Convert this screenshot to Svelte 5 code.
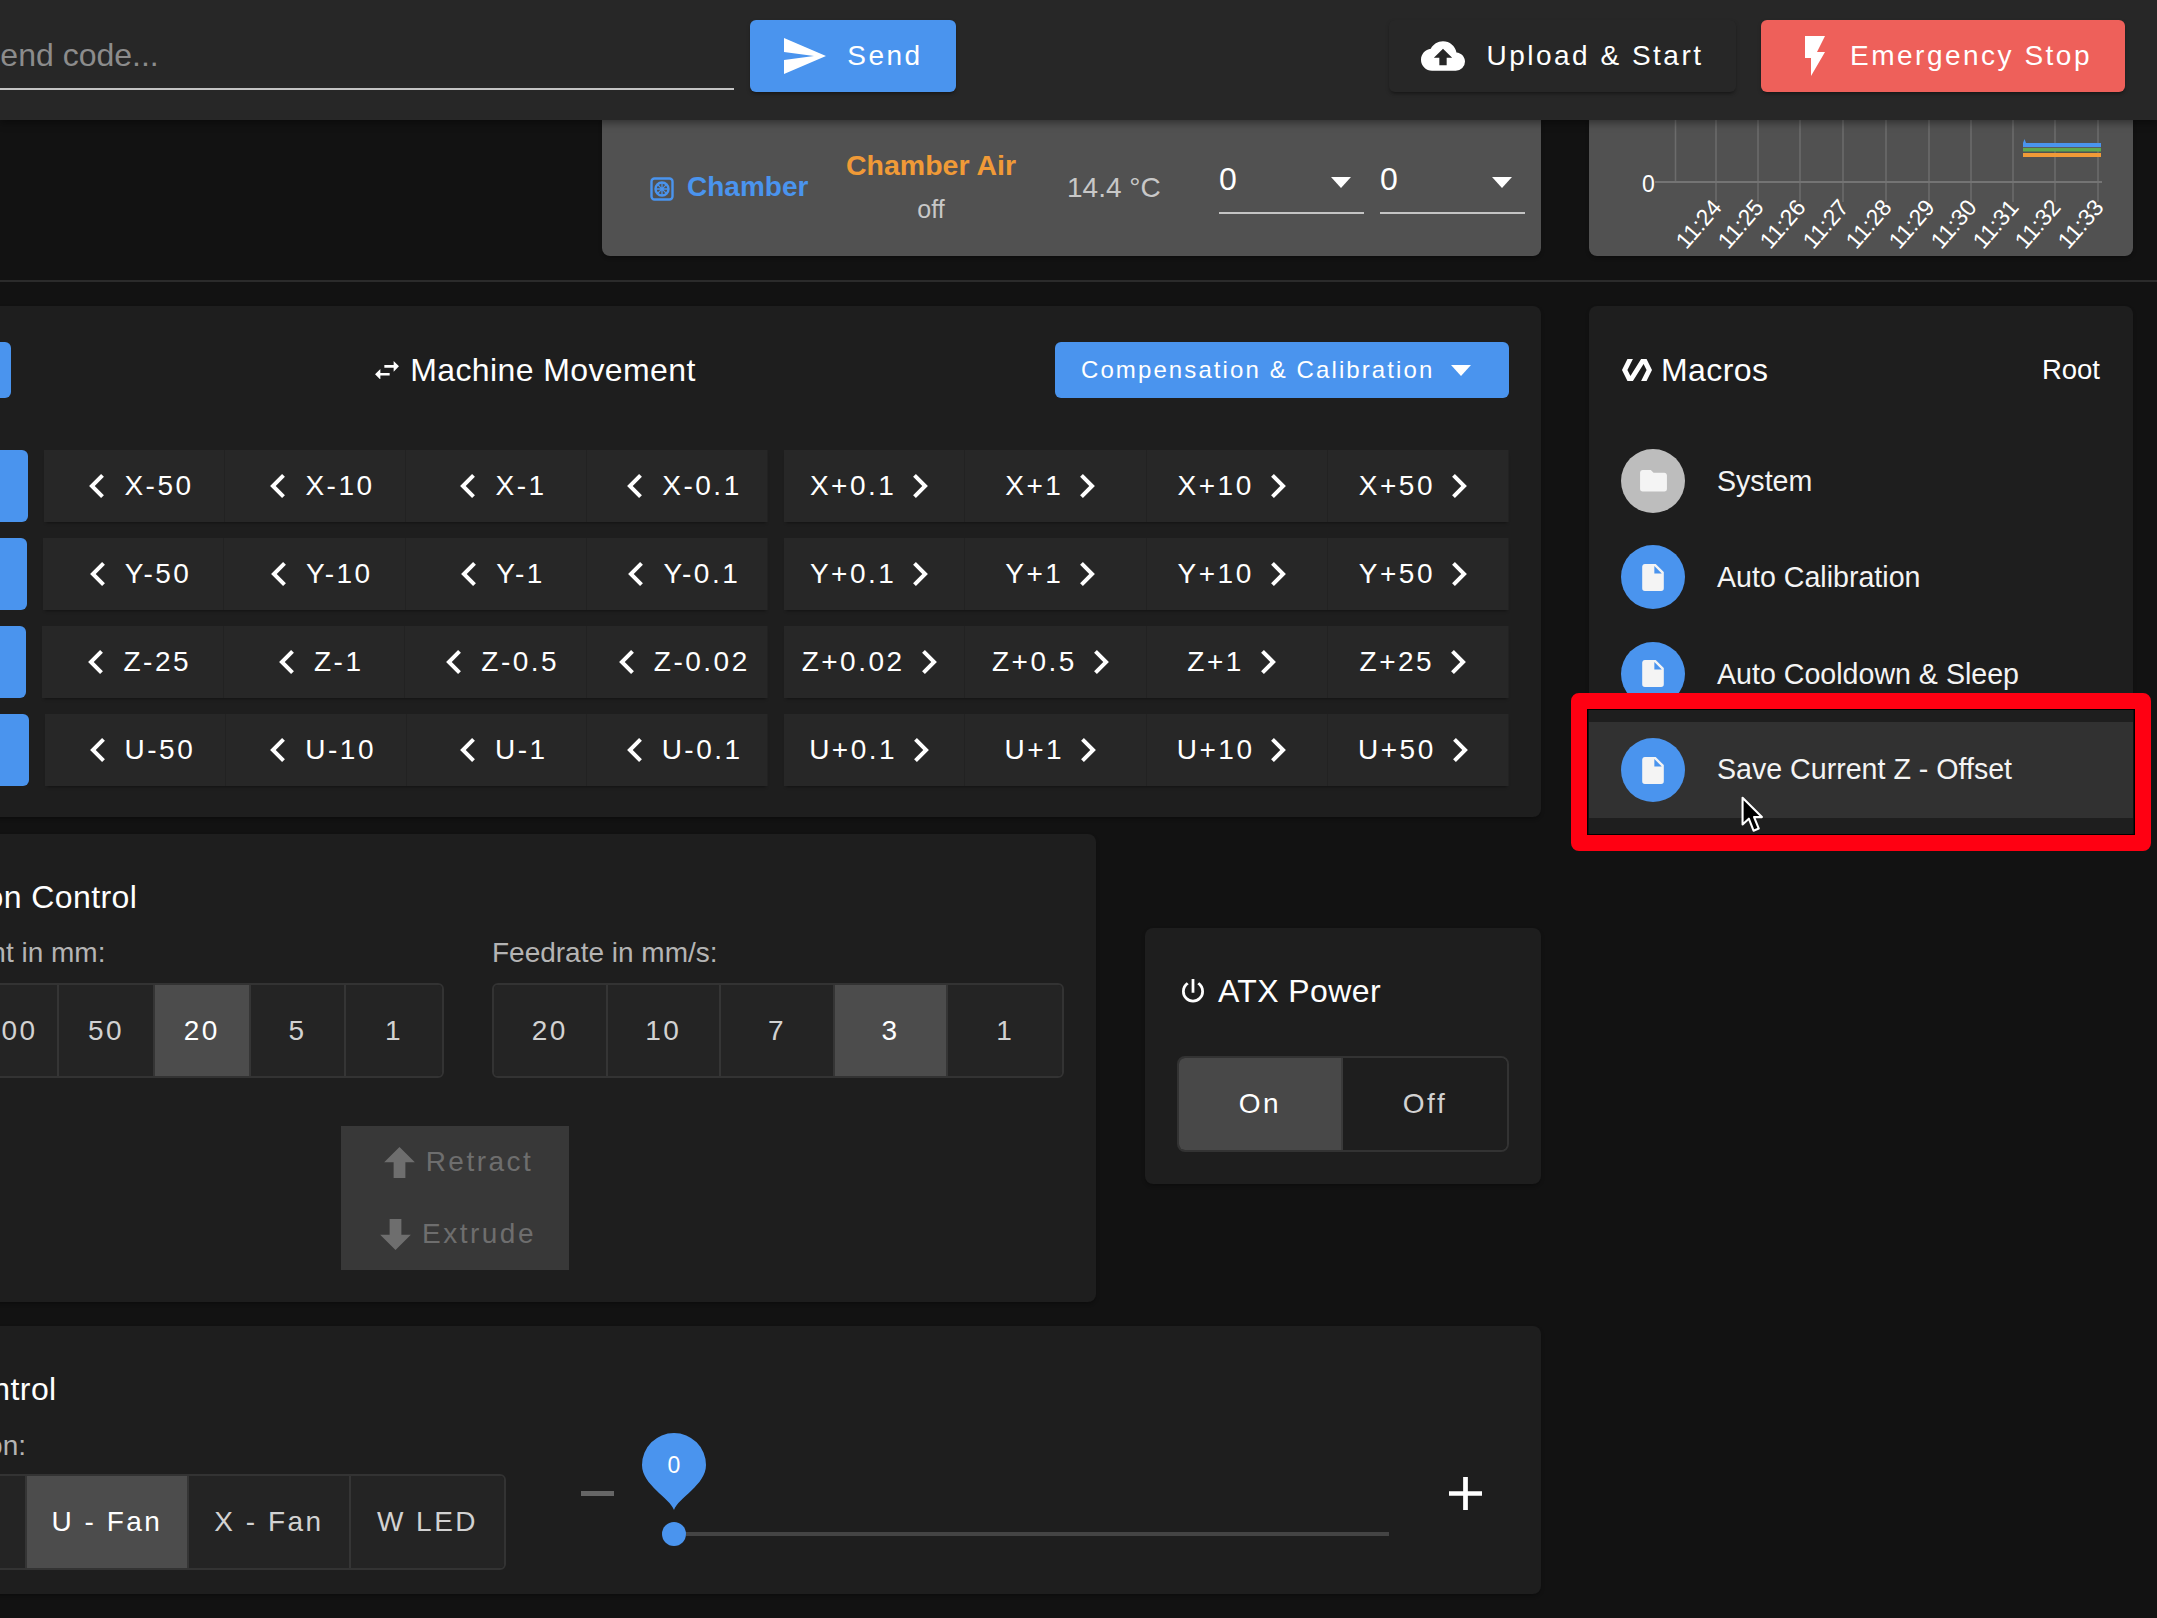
<script>
  const ticks = ["11:24", "11:25", "11:26", "11:27", "11:28", "11:29", "11:30", "11:31", "11:32", "11:33"];
  const gridX = [127, 169, 211, 254, 297, 340, 382, 424, 466, 509];

  const moveRows = [
    { axis: "X", home: 216, steps: ["50", "10", "1", "0.1"] },
    { axis: "Y", home: 215, steps: ["50", "10", "1", "0.1"] },
    { axis: "Z", home: 214, steps: ["25", "1", "0.5", "0.02"] },
    { axis: "U", home: 217, steps: ["50", "10", "1", "0.1"] }
  ];

  const amounts = ["200", "100", "50", "20", "5", "1"];
  const feedrates = ["20", "10", "7", "3", "1"];

  const macros = [
    { name: "System", folder: true },
    { name: "Auto Calibration" },
    { name: "Auto Cooldown & Sleep" },
    { name: "Save Current Z - Offset", hover: true }
  ];

  const chevronLeft = "M15.41,16.58L10.83,12L15.41,7.41L14,6L8,12L14,18L15.41,16.58Z";
  const chevronRight = "M8.59,16.58L13.17,12L8.59,7.41L10,6L16,12L10,18L8.59,16.58Z";
</script>

<header class="topbar">
  <input class="code-input" placeholder="Send code..." />
  <button class="btn blue send">
    <svg class="send-icon" viewBox="2 3 21 18"><path d="M2,21L23,12L2,3V10L17,12L2,14V21Z" /></svg>
    Send
  </button>
  <button class="btn dark upload">
    <svg class="upload-icon" viewBox="0 4 24 16"><path d="M14,13V17H10V13H7L12,8L17,13M19.35,10.03C18.67,6.59 15.64,4 12,4C9.11,4 6.6,5.64 5.35,8.03C2.34,8.36 0,10.9 0,14A6,6 0 0,0 6,20H19A5,5 0 0,0 24,15C24,12.36 21.95,10.22 19.35,10.03Z" /></svg>
    Upload &amp; Start
  </button>
  <button class="btn red stop">
    <svg class="flash-icon" viewBox="7 2 10 20"><path d="M7,2V13H10V22L17,10H13L17,2H7Z" /></svg>
    Emergency Stop
  </button>
</header>

<main class="dash">
  <section class="top-row">
    <div class="card chamber">
      <div class="chamber-name">
        <svg class="chamber-icon" viewBox="0 0 24 24">
          <rect x="1.5" y="1.5" width="21" height="21" rx="3" />
          <circle cx="12" cy="12" r="6.5" />
          <path d="M12 5.5V18.5M5.5 12H18.5M7.4 7.4L16.6 16.6M16.6 7.4L7.4 16.6" />
        </svg>
        Chamber
      </div>
      <div class="heater">
        <div class="heater-name">Chamber Air</div>
        <div class="heater-state">off</div>
      </div>
      <div class="temp">14.4 °C</div>
      <div class="select first"><span>0</span><i class="caret"></i></div>
      <div class="select"><span>0</span><i class="caret"></i></div>
    </div>
    <div class="card chart">
      <svg viewBox="0 0 544 136" width="544" height="136">
        <line class="grid" x1="86.5" y1="0" x2="86.5" y2="62" />
        {#each gridX as x}
          <line class="grid" x1={x} y1="0" x2={x} y2="82" />
        {/each}
        <line class="axis" x1="66" y1="62" x2="513" y2="62" />
        <text class="tick" x="53" y="72">0</text>
        {#each ticks as t, i}
          <text class="tick" text-anchor="end" transform="translate({gridX[i] + 7} 88) rotate(-49)">{t}</text>
        {/each}
        <path class="line-blue" d="M434 27V23L435.500 19L437 23H512V27Z" />
        <rect x="434" y="27" width="78" height="1.500" fill="#5c5c5c" />
        <rect x="434" y="28" width="78" height="3.500" fill="#5fa84f" />
        <rect x="434" y="33" width="78" height="4" fill="#f09a37" />
      </svg>
    </div>
  </section>

  <hr class="rule" />

  <section class="columns">
    <div class="left-col">
      <div class="card machine">
        <div class="machine-head">
          <button class="btn blue home-all">Home All</button>
          <h2 class="title machine-title">
            <svg class="swap-icon" viewBox="3 5 18 14"><path d="M21,9L17,5V8H10V10H17V13M7,11L3,15L7,19V16H14V14H7V11Z" /></svg>
            Machine Movement
          </h2>
          <button class="btn blue comp">Compensation &amp; Calibration <i class="caret"></i></button>
        </div>
        {#each moveRows as row}
          <div class="move-row">
            <button class="btn blue home" style="width: {row.home}px">Home {row.axis}</button>
            <div class="move-group">
              {#each row.steps as step}
                <button class="btn move minus">
                  <svg class="chev" viewBox="8 6 7.41 12"><path d={chevronLeft} /></svg>
                  {row.axis}-{step}
                </button>
              {/each}
            </div>
            <div class="move-group plus-group">
              {#each [...row.steps].reverse() as step}
                <button class="btn move plus">
                  {row.axis}+{step}
                  <svg class="chev" viewBox="8.59 6 7.41 12"><path d={chevronRight} /></svg>
                </button>
              {/each}
            </div>
          </div>
        {/each}
      </div>

      <div class="extrusion-row">
        <div class="card extrusion">
          <h2 class="title extrusion-title">Extrusion Control</h2>
          <div class="amounts">
            <div class="amount-col">
              <div class="field-label">Extrude amount in mm:</div>
              <div class="seg amount-seg">
                {#each amounts as a}
                  <button class="seg-btn" class:active={a === "20"}>{a}</button>
                {/each}
              </div>
            </div>
            <div class="feed-col">
              <div class="field-label">Feedrate in mm/s:</div>
              <div class="seg">
                {#each feedrates as f}
                  <button class="seg-btn" class:active={f === "3"}>{f}</button>
                {/each}
              </div>
            </div>
          </div>
          <div class="extrude-block">
            <button class="extrude-btn retract">
              <svg viewBox="4.16 4.16 15.68 15.84"><path d="M15,20H9V12H4.16L12,4.16L19.84,12H15V20Z" /></svg>
              Retract
            </button>
            <button class="extrude-btn">
              <svg viewBox="4.16 4 15.68 15.84"><path d="M9,4H15V12H19.84L12,19.84L4.16,12H9V4Z" /></svg>
              Extrude
            </button>
          </div>
        </div>

        <div class="card atx">
          <h2 class="title atx-title">
            <svg class="power-icon" viewBox="4 3 16 17"><path d="M16.56,5.44L15.11,6.89C16.84,7.94 18,9.83 18,12A6,6 0 0,1 12,18A6,6 0 0,1 6,12C6,9.83 7.16,7.94 8.88,6.88L7.44,5.44C5.36,6.88 4,9.28 4,12A8,8 0 0,0 12,20A8,8 0 0,0 20,12C20,9.28 18.64,6.88 16.56,5.44M13,3H11V13H13" /></svg>
            ATX Power
          </h2>
          <div class="seg atx-seg">
            <button class="seg-btn active">On</button>
            <button class="seg-btn off">Off</button>
          </div>
        </div>
      </div>

      <div class="card fan">
        <h2 class="title fan-title">Fan Control</h2>
        <div class="fan-body">
          <div class="fan-left">
            <div class="field-label fan-label">Fan Selection:</div>
            <div class="seg fan-seg">
              <button class="seg-btn fan-stub"></button>
              <button class="seg-btn active">U - Fan</button>
              <button class="seg-btn">X - Fan</button>
              <button class="seg-btn led">W LED</button>
            </div>
          </div>
          <div class="slider">
            <svg class="slider-minus" viewBox="5 11 14 2" preserveAspectRatio="none"><path d="M19,13H5V11H19V13Z" /></svg>
            <div class="track">
              <div class="thumb">
                <svg class="pin" viewBox="0 0 64 77" width="64" height="77">
                  <path d="M32 77C28 65 0 52 0 32A32 32 0 1 1 64 32C64 52 36 65 32 77Z" />
                  <text x="32" y="40" text-anchor="middle">0</text>
                </svg>
              </div>
              <div class="bar"></div>
            </div>
            <svg class="slider-plus" viewBox="5 5 14 14"><path d="M19,13H13V19H11V13H5V11H11V5H13V11H19V13Z" /></svg>
          </div>
        </div>
      </div>
    </div>

    <div class="card macros">
      <div class="macro-head">
        <h2 class="title">
          <svg class="macro-icon" viewBox="1 4 22 16"><path d="M19,4H15L7.18,16.43L4.97,12L9,4H5L1,12L5,20H9L16.82,7.57L19.03,12L15,20H19L23,12L19,4Z" /></svg>
          Macros
        </h2>
        <span class="root">Root</span>
      </div>
      <ul class="macro-list">
        {#each macros as m}
          <li class="macro" class:hover={m.hover}>
            <span class="avatar" class:folder={m.folder}>
              {#if m.folder}
                <svg class="folder-icon" viewBox="2 4 20 16"><path d="M10,4H4C2.89,4 2,4.89 2,6V18A2,2 0 0,0 4,20H20A2,2 0 0,0 22,18V8C22,6.89 21.1,6 20,6H12L10,4Z" /></svg>
              {:else}
                <svg class="file-icon" viewBox="4 2 16 20"><path d="M13,9V3.5L18.5,9M6,2C4.89,2 4,2.89 4,4V20A2,2 0 0,0 6,22H18A2,2 0 0,0 20,20V8L14,2H6Z" /></svg>
              {/if}
            </span>
            <span class="macro-name">{m.name}</span>
          </li>
        {/each}
      </ul>
      <div class="highlight"></div>
      <svg class="pointer" viewBox="0 0 22 36" width="23" height="38">
        <path d="M1.500 1.500V27L7.500 21.500L12 33L17 31L12.500 20H20Z" stroke="#fff" stroke-width="2" stroke-linejoin="round" />
      </svg>
    </div>
  </section>
</main>

<style>
  :global(body) {
    margin: 0;
    height: 1618px;
    overflow: hidden;
    background: #121212;
    color: #fff;
    font-family: "Liberation Sans", Arial, sans-serif;
  }

  * {
    box-sizing: border-box;
  }

  button {
    border: 0;
    font-family: inherit;
    color: inherit;
    padding: 0;
  }

  svg path {
    fill: currentColor;
  }

  .topbar {
    position: relative;
    z-index: 2;
    display: flex;
    align-items: flex-start;
    height: 120px;
    padding: 20px 32px 0 0;
    background: #272727;
    box-shadow: 0 3px 8px rgba(0, 0, 0, 0.4);
  }

  .code-input {
    width: 755px;
    height: 56px;
    margin: 14px 16px 0 -21px;
    padding: 0 0 12px;
    background: transparent;
    border: 0;
    border-bottom: 2px solid #c4c4c4;
    color: #fff;
    font: 32px "Liberation Sans", Arial, sans-serif;
    outline: none;
  }

  .code-input::placeholder {
    color: #8c8c8c;
    opacity: 1;
  }

  .btn {
    display: flex;
    align-items: center;
    justify-content: center;
    font-size: 28px;
    letter-spacing: 2.5px;
    border-radius: 6px;
    white-space: nowrap;
  }

  .blue {
    background: #4a94ee;
  }

  .red {
    background: #ee605a;
  }

  .dark {
    background: #272727;
  }

  .send,
  .upload,
  .stop {
    height: 72px;
    box-shadow: 0 3px 3px -2px rgba(0, 0, 0, 0.3), 0 2px 4px rgba(0, 0, 0, 0.2);
  }

  .send {
    width: 206px;
    gap: 21px;
    padding-left: 1px;
  }

  .send-icon {
    width: 42px;
    height: 36px;
  }

  .upload {
    width: 347px;
    margin-left: auto;
    margin-right: 25px;
    gap: 21px;
  }

  .upload-icon {
    width: 44px;
    height: 32px;
  }

  .flash-icon {
    width: 20px;
    height: 40px;
  }

  .stop {
    width: 364px;
    gap: 25px;
    padding-left: 11px;
  }

  .dash {
    width: 2377px;
    margin-left: -220px;
  }

  .top-row,
  .columns {
    display: flex;
    gap: 48px;
  }

  .card {
    background: #1e1e1e;
    border-radius: 8px;
    box-shadow: 0 3px 3px -2px rgba(0, 0, 0, 0.2), 0 2px 4px rgba(0, 0, 0, 0.14);
  }

  .chamber,
  .chart {
    height: 136px;
    background: #515151;
    border-radius: 0 0 8px 8px;
  }

  .chamber {
    display: flex;
    align-items: center;
    width: 939px;
    margin-left: 822px;
    padding-left: 48px;
    color: #c8c8c8;
  }

  .chamber-name {
    display: flex;
    align-items: center;
    gap: 13px;
    width: 196px;
    padding-bottom: 2px;
    font-size: 28px;
    font-weight: 700;
    color: #4a94ee;
  }

  .chamber-icon {
    width: 24px;
    height: 24px;
    margin-top: 4px;
    fill: none;
    stroke: #4a94ee;
    stroke-width: 2.4;
  }

  .chamber-icon path {
    fill: none;
    stroke-width: 1.3;
  }

  .heater {
    width: 170px;
    padding-bottom: 3px;
    text-align: center;
  }

  .heater-name {
    font-size: 28.5px;
    font-weight: 700;
    color: #f09a37;
    white-space: nowrap;
  }

  .heater-state {
    margin-top: 13px;
    font-size: 25px;
  }

  .temp {
    width: 93px;
    margin-left: 51px;
    font-size: 28px;
    white-space: nowrap;
  }

  .select {
    display: flex;
    align-items: center;
    justify-content: space-between;
    width: 145px;
    height: 54px;
    margin-left: 16px;
    padding-right: 13px;
    border-bottom: 2px solid #c4c4c4;
    color: #fff;
    font-size: 32px;
    transform: translateY(-1px);
  }

  .select span {
    padding-bottom: 14px;
  }

  .select .caret {
    margin-bottom: 8px;
  }

  .select.first {
    margin-left: 59px;
  }

  .caret {
    display: block;
    width: 0;
    height: 0;
    border-left: 10px solid transparent;
    border-right: 10px solid transparent;
    border-top: 11px solid #fff;
  }

  .chart {
    width: 544px;
  }

  .chart svg {
    display: block;
  }

  .grid {
    stroke: #6c6c6c;
    stroke-width: 1.5;
  }

  .axis {
    stroke: #747474;
    stroke-width: 2;
  }

  .tick {
    fill: #fff;
    font-size: 23px;
  }

  .chart .line-blue {
    fill: #4a94ee;
  }

  .rule {
    height: 2px;
    margin: 24px 0;
    border: 0;
    background: #2b2b2b;
  }

  .left-col {
    width: 1761px;
  }

  .title {
    display: flex;
    align-items: center;
    margin: 0;
    font-size: 32px;
    font-weight: 400;
    line-height: 36px;
    letter-spacing: 0.4px;
    white-space: nowrap;
  }

  .machine {
    height: 511px;
    padding: 36px 32px 0;
  }

  .machine-head {
    display: flex;
    align-items: center;
    justify-content: space-between;
    height: 56px;
    margin-bottom: 52px;
  }

  .machine-title {
    margin-left: 5px;
  }

  .home-all {
    width: 199px;
    height: 56px;
  }

  .swap-icon {
    width: 24px;
    height: 18.6px;
    margin-right: 11px;
  }

  .comp {
    width: 454px;
    height: 56px;
    justify-content: flex-start;
    gap: 17px;
    padding-left: 26px;
    font-size: 24px;
    letter-spacing: 2.1px;
  }

  .move-row {
    display: flex;
    height: 72px;
    margin-bottom: 16px;
    gap: 16px;
  }

  .home {
    flex: none;
  }

  .move-group {
    flex: 1;
    display: grid;
    grid-template-columns: repeat(4, 1fr);
    min-width: 0;
    box-shadow: 0 3px 3px -2px rgba(0, 0, 0, 0.4);
  }

  .plus-group {
    flex: none;
    width: 725px;
  }

  .move {
    height: 72px;
    gap: 20px;
    background: #272727;
    border-radius: 0;
    border-right: 1px solid #222;
  }

  .move.minus {
    padding-left: 15px;
  }

  .move.plus {
    gap: 17px;
    padding-right: 10px;
  }

  .chev {
    width: 15px;
    height: 24px;
  }

  .extrusion-row {
    display: flex;
    align-items: flex-start;
    margin-top: 17px;
  }

  .extrusion {
    width: 1316px;
    height: 468px;
    padding: 45px 32px 0;
  }

  .extrusion-title {
    margin-left: 73px;
  }

  .amounts {
    display: flex;
    gap: 48px;
    margin-top: 22px;
  }

  .amount-col {
    width: 633px;
  }

  .feed-col {
    width: 573px;
  }

  .field-label {
    height: 32px;
    margin-bottom: 14px;
    font-size: 28px;
    line-height: 32px;
    color: #b4b4b4;
    white-space: nowrap;
  }

  .amount-col .field-label {
    padding-left: 4px;
  }

  .seg {
    display: grid;
    grid-auto-flow: column;
    grid-auto-columns: 1fr;
    height: 95px;
    border: 2px solid #333;
    border-radius: 6px;
    overflow: hidden;
  }

  .amount-seg {
    width: 578px;
    margin-left: auto;
  }

  .seg-btn {
    background: #242424;
    border-right: 2px solid #353535;
    font-size: 28px;
    letter-spacing: 2.5px;
    color: #d2d2d2;
  }

  .seg-btn:last-child {
    border-right: 0;
  }

  .seg-btn.active {
    background: #4c4c4c;
    color: #fff;
  }

  .extrude-block {
    width: 228px;
    margin: 48px 0 0 529px;
    background: #383838;
  }

  .extrude-btn {
    display: flex;
    align-items: center;
    justify-content: center;
    gap: 11px;
    width: 100%;
    height: 72px;
    padding-left: 6px;
    background: transparent;
    font-size: 28px;
    letter-spacing: 2.5px;
    color: #6e6e6e;
  }

  .extrude-btn svg {
    width: 31px;
    height: 31px;
  }

  .extrude-btn.retract {
    padding-left: 7px;
  }

  .atx {
    width: 396px;
    height: 256px;
    margin: 94px 0 0 49px;
    padding: 45px 32px 0;
  }

  .atx-title {
    gap: 14px;
    padding-left: 5px;
  }

  .power-icon {
    width: 22px;
    height: 23.4px;
  }

  .atx-seg {
    height: 96px;
    margin-top: 47px;
    border-radius: 8px;
  }

  .atx-seg .seg-btn.active {
    background: #484848;
    border-right: 2px solid #3a3a3a;
  }

  .atx-seg .off {
    background: #1e1e1e;
  }

  .fan {
    height: 268px;
    margin-top: 24px;
    padding: 45px 32px 0;
  }

  .fan-title {
    margin-left: 73px;
  }

  .fan-body {
    display: flex;
    margin-top: 23px;
  }

  .fan-label {
    margin-bottom: 12px;
    margin-left: 35px;
  }

  .fan-seg {
    grid-auto-columns: auto;
    grid-template-columns: 213px 162px 162px 153px;
    height: 96px;
  }

  .slider {
    display: flex;
    align-items: center;
    width: 901px;
    height: 38px;
    margin: 44px 0 0 75px;
  }

  .slider-minus {
    width: 33px;
    height: 5px;
    color: #666;
  }

  .track {
    align-self: flex-start;
    display: flex;
    align-items: center;
    margin: 48px 0 0 48px;
  }

  .thumb {
    position: relative;
    width: 24px;
    height: 24px;
    border-radius: 50%;
    background: #4a94ee;
  }

  .pin {
    position: absolute;
    left: -20px;
    bottom: 36px;
    overflow: visible;
  }

  .pin path {
    fill: #4a94ee;
  }

  .pin text {
    fill: #fff;
    font-size: 23px;
  }

  .bar {
    width: 703px;
    height: 4px;
    background: #444;
  }

  .slider-plus {
    width: 33px;
    height: 33px;
    margin-left: 60px;
  }

  .macros {
    position: relative;
    width: 544px;
    height: 534px;
    padding-top: 46px;
  }

  .macro-head {
    display: flex;
    align-items: center;
    justify-content: space-between;
    padding: 0 33px;
  }

  .macro-icon {
    width: 30px;
    height: 22px;
    margin-right: 9px;
  }

  .root {
    font-size: 27.5px;
  }

  .macro-list {
    margin: 45px 0 0;
    padding: 0;
    list-style: none;
  }

  .macro {
    display: flex;
    align-items: center;
    height: 96.3px;
    padding-left: 32px;
    font-size: 28.6px;
    color: #f4f4f4;
  }

  .macro-name {
    margin-top: 1px;
  }

  .macro.hover {
    background: #313131;
  }

  .macro.hover .macro-name {
    margin-top: -2px;
  }

  .avatar {
    display: flex;
    align-items: center;
    justify-content: center;
    width: 64px;
    height: 64px;
    margin-right: 32px;
    border-radius: 50%;
    background: #4a94ee;
  }

  .avatar.folder {
    background: #bdbdbd;
  }

  .folder-icon {
    width: 27px;
    height: 21.5px;
  }

  .file-icon {
    width: 22px;
    height: 27px;
  }

  .highlight {
    position: absolute;
    left: -18px;
    top: 387px;
    width: 580px;
    height: 158px;
    border: 16px solid #ff0012;
    border-radius: 8px;
    box-shadow: inset 0 0 0 1px #000;
    pointer-events: none;
  }

  .pointer {
    position: absolute;
    left: 152px;
    top: 490px;
    color: #000;
  }
</style>
